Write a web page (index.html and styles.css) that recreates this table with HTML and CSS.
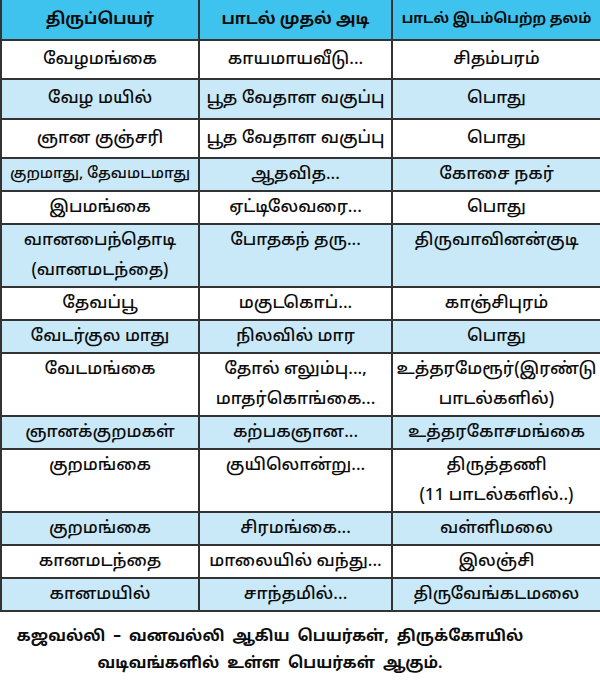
FILE: index.html
```html
<!DOCTYPE html>
<html lang="ta">
<head>
<meta charset="utf-8">
<link rel="stylesheet" href="styles.css">
</head>
<body>
<table class="names">
  <colgroup><col class="c1"><col class="c2"><col class="c3"></colgroup>
  <thead>
    <tr class="head"><th>திருப்பெயர்</th><th>பாடல் முதல் அடி</th><th class="h3">பாடல் இடம்பெற்ற தலம்</th></tr>
  </thead>
  <tbody>
    <tr class="big"><td>வேழமங்கை</td><td>காயமாயவீடு...</td><td>சிதம்பரம்</td></tr>
    <tr class="big big2 alt"><td>வேழ மயில்</td><td>பூத வேதாள வகுப்பு</td><td>பொது</td></tr>
    <tr class="big"><td>ஞான குஞ்சரி</td><td>பூத வேதாள வகுப்பு</td><td>பொது</td></tr>
    <tr class="alt"><td class="sm"><div class="ln">குறமாது, தேவமடமாது</div></td><td><div class="ln">ஆதவித...</div></td><td><div class="ln">கோசை நகர்</div></td></tr>
    <tr><td><div class="ln">இபமங்கை</div></td><td><div class="ln">ஏட்டிலேவரை...</div></td><td><div class="ln">பொது</div></td></tr>
    <tr class="alt"><td><div class="ln">வானபைந்தொடி</div><div class="ln">(வானமடந்தை)</div></td><td><div class="ln">போதகந் தரு...</div></td><td><div class="ln">திருவாவினன்குடி</div></td></tr>
    <tr><td><div class="ln">தேவப்பூ</div></td><td><div class="ln">மகுடகொப்...</div></td><td><div class="ln">காஞ்சிபுரம்</div></td></tr>
    <tr class="alt"><td><div class="ln">வேடர்குல மாது</div></td><td><div class="ln">நிலவில் மார</div></td><td><div class="ln">பொது</div></td></tr>
    <tr><td><div class="ln">வேடமங்கை</div></td><td><div class="ln">தோல் எலும்பு...,</div><div class="ln">மாதர்கொங்கை...</div></td><td><div class="ln">உத்தரமேரூர்(இரண்டு</div><div class="ln">பாடல்களில்)</div></td></tr>
    <tr class="alt"><td><div class="ln">ஞானக்குறமகள்</div></td><td><div class="ln">கற்பகஞான...</div></td><td><div class="ln">உத்தரகோசமங்கை</div></td></tr>
    <tr><td><div class="ln">குறமங்கை</div></td><td><div class="ln">குயிலொன்று...</div></td><td><div class="ln">திருத்தணி</div><div class="ln">(11 பாடல்களில்..)</div></td></tr>
    <tr class="alt"><td><div class="ln">குறமங்கை</div></td><td><div class="ln">சிரமங்கை...</div></td><td><div class="ln">வள்ளிமலை</div></td></tr>
    <tr><td><div class="ln">கானமடந்தை</div></td><td><div class="ln">மாலையில் வந்து...</div></td><td><div class="ln">இலஞ்சி</div></td></tr>
    <tr class="alt"><td><div class="ln">கானமயில்</div></td><td><div class="ln">சாந்தமில்...</div></td><td><div class="ln">திருவேங்கடமலை</div></td></tr>
  </tbody>
</table>
<p class="note"><span class="nl">கஜவல்லி – வனவல்லி ஆகிய பெயர்கள், திருக்கோயில்</span><span class="nl">வடிவங்களில் உள்ள பெயர்கள் ஆகும்.</span></p>
</body>
</html>
```
FILE: styles.css
```css
html, body {
  margin: 0;
  padding: 0;
  background: #ffffff;
}
body {
  width: 600px;
  font-family: "Noto Sans Tamil", "Lohit Tamil", "Noto Sans", "DejaVu Sans", sans-serif;
  color: #0d0d0d;
}
.names {
  width: 600px;
  border-collapse: collapse;
  table-layout: fixed;
  margin: 0;
}
.c1 { width: 198px; }
.c2 { width: 193px; }
.c3 { width: 209px; }
.names th,
.names td {
  border: 2px solid #333333;
  text-align: center;
  vertical-align: top;
  font-size: 17px;
  font-weight: 500;
  line-height: 30px;
  padding: 1px 0 0;
  white-space: nowrap;
  overflow: hidden;
}
.names td.sm {
  font-size: 15px;
}
.ln {
  height: 30px;
  line-height: 30px;
}
.names thead th {
  border-top: none;
  background: #3ec3ee;
  font-weight: bold;
  font-size: 16px;
  height: 39px;
  vertical-align: middle;
  padding: 0;
}
.names thead th.h3 {
  font-size: 14px;
}
.names tr.big td {
  vertical-align: middle;
  height: 37px;
  padding: 0;
}
.names tr.big2 td {
  height: 38px;
}
.names tr.alt td {
  background: #c9e9f9;
}
.note {
  margin: 12px 0 0;
  padding-right: 60px;
  text-align: center;
  font-weight: bold;
  font-size: 15.5px;
  word-spacing: 4px;
}
.nl {
  display: block;
  height: 27px;
  line-height: 27px;
  white-space: nowrap;
}
```
